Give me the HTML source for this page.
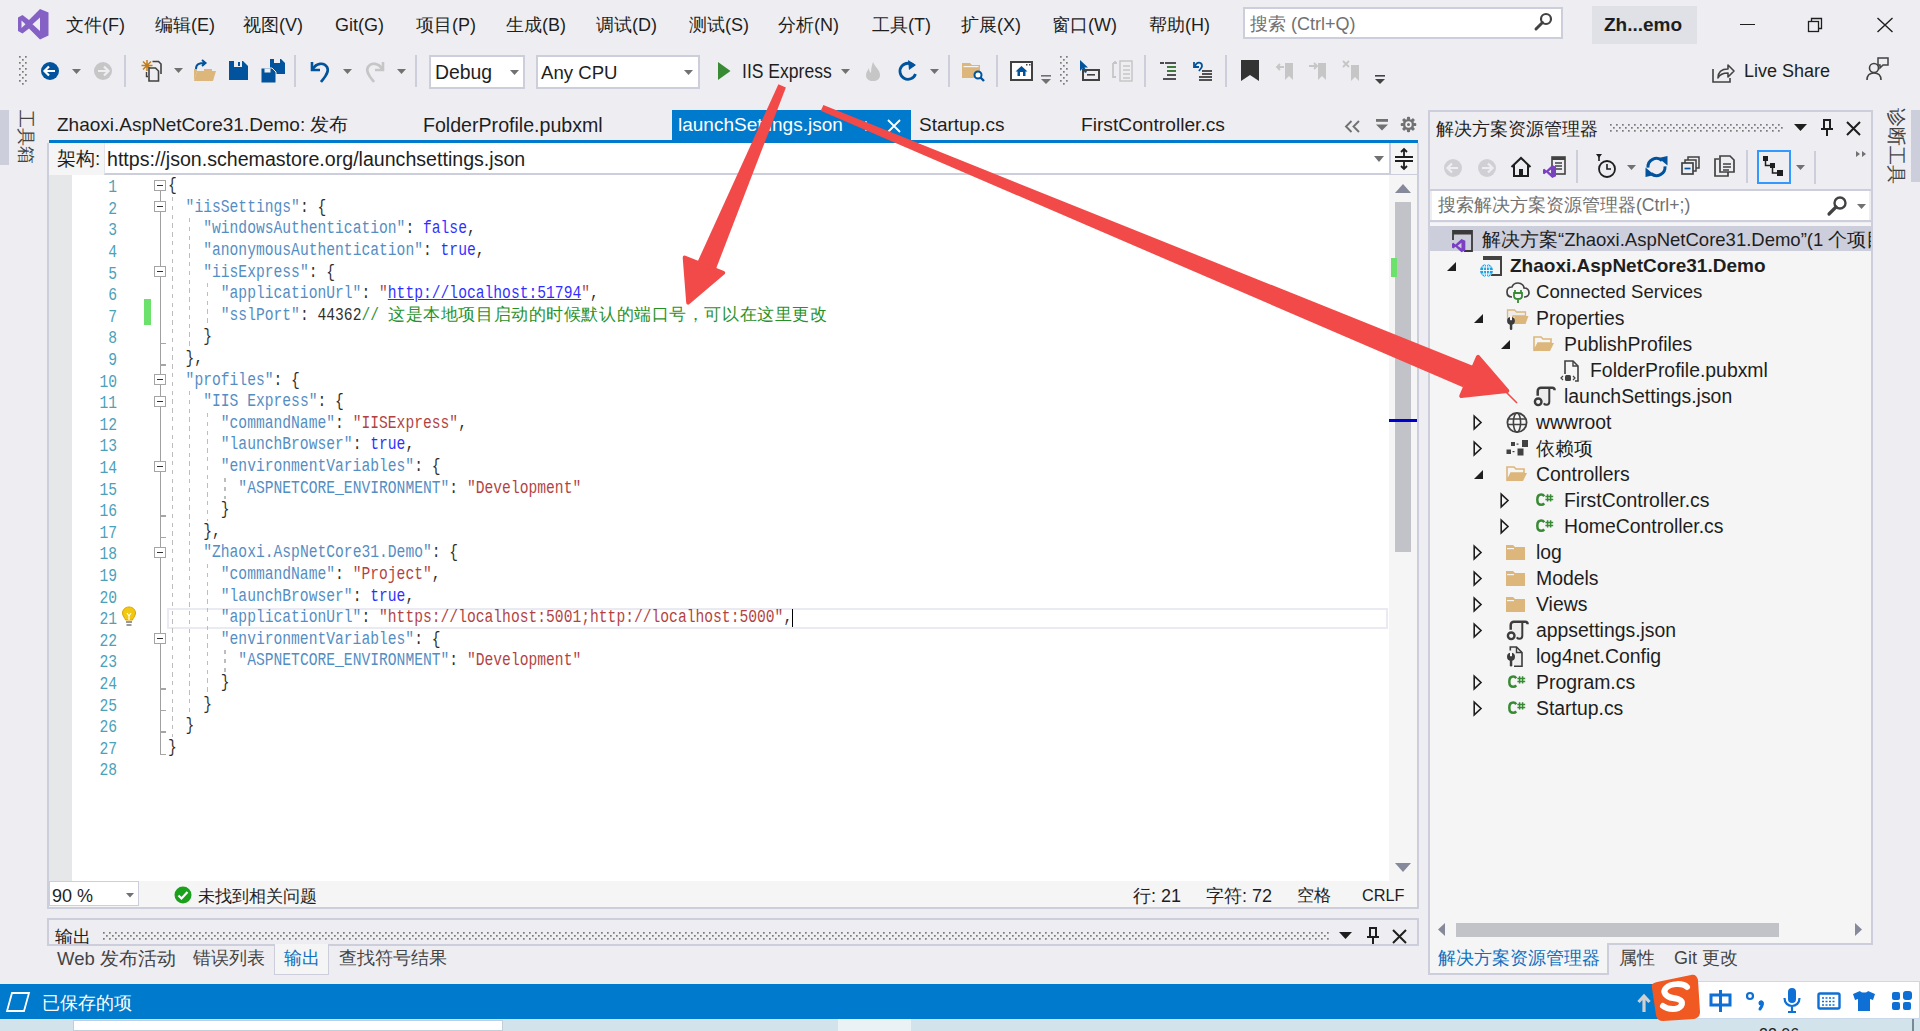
<!DOCTYPE html><html><head><meta charset="utf-8"><title>launchSettings.json - Visual Studio</title><style>
*{margin:0;padding:0}
html,body{width:1920px;height:1031px;overflow:hidden;background:#EEEEF2}
body{position:relative;font-family:"Liberation Sans",sans-serif}
.t{position:absolute;white-space:nowrap;line-height:1.15}
.b{position:absolute}
.s{position:absolute;overflow:visible}
.ln{position:absolute;left:61px;width:56px;text-align:right;font-family:"Liberation Mono",monospace;font-size:18px;line-height:21.6px;color:#2B91AF;transform-origin:100% 0;transform:scaleX(0.8139);opacity:0.85}
.code{position:absolute;left:168.3px;white-space:pre;font-family:"Liberation Mono",monospace;font-size:18px;line-height:21.6px;color:#000;transform-origin:0 0;transform:scaleX(0.8139);opacity:0.82}
.cjk{position:absolute;white-space:pre;color:#008000;font-size:17px;letter-spacing:0.58px;line-height:21.6px;font-family:"Liberation Serif",serif;opacity:0.85;margin-top:-1px}
</style></head><body><svg width="0" height="0" style="position:absolute"><defs><pattern id="gdots" width="6" height="6" patternUnits="userSpaceOnUse"><rect x="0" y="0" width="1.7" height="1.7" fill="#7A7A7A"/><rect x="3" y="3" width="1.7" height="1.7" fill="#7A7A7A"/></pattern></defs></svg>
<svg class="s" style="left:18px;top:9px;" width="31" height="31" viewBox="0 0 31 31"><path fill-rule="evenodd" d="M22 0L30.5 3.5V26.5L22 30.5L11 19.5L4.5 24.5L0 22V8.5L4.5 6L11 11L22 0ZM22 8.5L14.5 15.25L22 22ZM3.5 11.5V19L7.5 15.25Z" fill="#8661C5"/></svg>
<div class="t" style="left:66px;top:15px;font-size:18px;color:#1E1E1E;font-weight:normal;">文件(F)</div>
<div class="t" style="left:155px;top:15px;font-size:18px;color:#1E1E1E;font-weight:normal;">编辑(E)</div>
<div class="t" style="left:243px;top:15px;font-size:18px;color:#1E1E1E;font-weight:normal;">视图(V)</div>
<div class="t" style="left:335px;top:15px;font-size:18px;color:#1E1E1E;font-weight:normal;">Git(G)</div>
<div class="t" style="left:416px;top:15px;font-size:18px;color:#1E1E1E;font-weight:normal;">项目(P)</div>
<div class="t" style="left:506px;top:15px;font-size:18px;color:#1E1E1E;font-weight:normal;">生成(B)</div>
<div class="t" style="left:596px;top:15px;font-size:18px;color:#1E1E1E;font-weight:normal;">调试(D)</div>
<div class="t" style="left:689px;top:15px;font-size:18px;color:#1E1E1E;font-weight:normal;">测试(S)</div>
<div class="t" style="left:778px;top:15px;font-size:18px;color:#1E1E1E;font-weight:normal;">分析(N)</div>
<div class="t" style="left:872px;top:15px;font-size:18px;color:#1E1E1E;font-weight:normal;">工具(T)</div>
<div class="t" style="left:961px;top:15px;font-size:18px;color:#1E1E1E;font-weight:normal;">扩展(X)</div>
<div class="t" style="left:1052px;top:15px;font-size:18px;color:#1E1E1E;font-weight:normal;">窗口(W)</div>
<div class="t" style="left:1149px;top:15px;font-size:18px;color:#1E1E1E;font-weight:normal;">帮助(H)</div>
<div class="b" style="left:1243px;top:7px;width:320px;height:32px;background:#fff;border:2px solid #CCCEDB;box-sizing:border-box"></div>
<div class="t" style="left:1250px;top:14px;font-size:18px;color:#717171;font-weight:normal;">搜索 (Ctrl+Q)</div>
<svg class="s" style="left:1533px;top:12px;" width="20" height="20" viewBox="0 0 20 20"><circle cx="13" cy="7" r="5" fill="none" stroke="#424242" stroke-width="2.2"/><path d="M9.5 10.5L3 17" stroke="#424242" stroke-width="3" stroke-linecap="round"/></svg>
<div class="b" style="left:1592px;top:6px;width:105px;height:38px;background:#DFE1E6"></div>
<div class="t" style="left:1604px;top:14px;font-size:19px;color:#1E1E1E;font-weight:bold;">Zh...emo</div>
<div class="b" style="left:1740px;top:23.5px;width:15px;height:1.2px;background:#1E1E1E"></div>
<svg class="s" style="left:1806px;top:16px;" width="20" height="18" viewBox="0 0 20 18"><rect x="2.5" y="5.5" width="10" height="10" fill="none" stroke="#1E1E1E" stroke-width="1.3"/><path d="M5.5 5.5V2.5H15.5V12.5H12.5" fill="none" stroke="#1E1E1E" stroke-width="1.3"/></svg>
<svg class="s" style="left:1876px;top:17px;" width="18" height="16" viewBox="0 0 18 16"><path d="M1.5 1L16.5 15M16.5 1L1.5 15" stroke="#1E1E1E" stroke-width="1.4"/></svg>
<svg class="s" style="left:19px;top:56px;" width="9" height="29" viewBox="0 0 9 29"><rect width="9" height="29" fill="url(#gdots)"/></svg>
<svg class="s" style="left:40px;top:61px;" width="20" height="20" viewBox="0 0 20 20"><circle cx="10" cy="10" r="9" fill="#00539C"/><path d="M4.5 10H15M9 5.5L4.5 10L9 14.5" fill="none" stroke="#fff" stroke-width="2.2"/></svg>
<svg class="s" style="left:71.5px;top:68.5px;" width="9" height="5" viewBox="0 0 9 5"><path d="M0 0H9L4.5 5Z" fill="#717171"/></svg>
<svg class="s" style="left:93px;top:61px;" width="20" height="20" viewBox="0 0 20 20"><circle cx="10" cy="10" r="9" fill="#C6C6C6"/><path d="M5 10H15.5M11 5.5L15.5 10L11 14.5" fill="none" stroke="#EEEEF2" stroke-width="2.2"/></svg>
<div class="b" style="left:124px;top:55px;width:2px;height:32px;background:#CCCEDB"></div>
<svg class="s" style="left:140px;top:59px;" width="24" height="24" viewBox="0 0 24 24"><path d="M7 1V12M1.5 6.5H12.5M3 2.5L11 10.5M11 2.5L3 10.5" stroke="#C27D1A" stroke-width="1.5"/><path d="M12.5 2.5H18.5L21 5V15" fill="none" stroke="#424242" stroke-width="1.6"/><path d="M9 9H15.5L18.5 12V22H9Z" fill="#EEEEF2" stroke="#424242" stroke-width="1.6"/><path d="M6.5 13V17.5H8" fill="none" stroke="#424242" stroke-width="1.4"/></svg>
<svg class="s" style="left:173.5px;top:67.5px;" width="9" height="5" viewBox="0 0 9 5"><path d="M0 0H9L4.5 5Z" fill="#717171"/></svg>
<svg class="s" style="left:193px;top:59px;" width="24" height="24" viewBox="0 0 24 24"><path d="M1 22L4 12H23L20 22Z" fill="#DCB67A"/><path d="M1 22V10H4V12" fill="#DCB67A"/><path d="M12 10V11H18V13" fill="none" stroke="#DCB67A" stroke-width="2"/><path d="M3 10C3 5 6 4 12 4M9 1L12.5 4L9 7" fill="none" stroke="#00539C" stroke-width="2"/></svg>
<svg class="s" style="left:229px;top:61px;" width="20" height="20" viewBox="0 0 20 20"><path d="M0 0H14L19 5V19H0Z" fill="#00539C"/><rect x="5" y="0" width="8" height="6" fill="#EEEEF2"/><rect x="9" y="1" width="2" height="4" fill="#00539C"/></svg>
<svg class="s" style="left:261px;top:59px;" width="25" height="25" viewBox="0 0 25 25"><path d="M9 0H20L24 4V15H9Z" fill="#00539C"/><rect x="13" y="0" width="6" height="4" fill="#EEEEF2"/><path d="M0 9H11L15 13V24H0Z" fill="#00539C" stroke="#EEEEF2" stroke-width="1"/><rect x="3.5" y="9.5" width="6" height="4" fill="#EEEEF2"/></svg>
<div class="b" style="left:294px;top:55px;width:2px;height:32px;background:#CCCEDB"></div>
<svg class="s" style="left:309px;top:59px;" width="23" height="24" viewBox="0 0 23 24"><path d="M3 3V11H11" fill="none" stroke="#00539C" stroke-width="2.6"/><path d="M4 10C7 4 15 3 18 8C21 13 15 19 12 23" fill="none" stroke="#00539C" stroke-width="2.6"/></svg>
<svg class="s" style="left:342.5px;top:68.5px;" width="9" height="5" viewBox="0 0 9 5"><path d="M0 0H9L4.5 5Z" fill="#717171"/></svg>
<svg class="s" style="left:363px;top:59px;" width="23" height="24" viewBox="0 0 23 24"><path d="M20 3V11H12" fill="none" stroke="#C6C6C6" stroke-width="2.6"/><path d="M19 10C16 4 8 3 5 8C2 13 8 19 11 23" fill="none" stroke="#C6C6C6" stroke-width="2.6"/></svg>
<svg class="s" style="left:396.5px;top:68.5px;" width="9" height="5" viewBox="0 0 9 5"><path d="M0 0H9L4.5 5Z" fill="#717171"/></svg>
<div class="b" style="left:415px;top:55px;width:2px;height:32px;background:#CCCEDB"></div>
<div class="b" style="left:429px;top:55px;width:96px;height:34px;background:#fff;border:2px solid #CCCEDB;box-sizing:border-box"></div>
<div class="t" style="left:435px;top:61px;font-size:19.4px;color:#1E1E1E;font-weight:normal;">Debug</div>
<svg class="s" style="left:509.5px;top:69.5px;" width="9" height="5" viewBox="0 0 9 5"><path d="M0 0H9L4.5 5Z" fill="#717171"/></svg>
<div class="b" style="left:536px;top:55px;width:164px;height:34px;background:#fff;border:2px solid #CCCEDB;box-sizing:border-box"></div>
<div class="t" style="left:541px;top:61.5px;font-size:18.6px;color:#1E1E1E;font-weight:normal;">Any CPU</div>
<svg class="s" style="left:683.5px;top:69.5px;" width="9" height="5" viewBox="0 0 9 5"><path d="M0 0H9L4.5 5Z" fill="#717171"/></svg>
<svg class="s" style="left:717.5px;top:62px;" width="14" height="18" viewBox="0 0 14 18"><path d="M0 0L12.5 9L0 18Z" fill="#388A34"/></svg>
<div class="t" style="left:742px;top:59.5px;font-size:19.4px;color:#1E1E1E;transform-origin:0 0;transform:scaleX(0.905)">IIS Express</div>
<svg class="s" style="left:840.5px;top:68.5px;" width="9" height="5" viewBox="0 0 9 5"><path d="M0 0H9L4.5 5Z" fill="#717171"/></svg>
<svg class="s" style="left:865px;top:62px;" width="16" height="19" viewBox="0 0 16 19"><path d="M8 0C10 5 15 8 15 13C15 17 12 19 8 19C4 19 1 17 1 13C1 10 3 8 4 6C4 9 5 10 6 11C6 6 7 3 8 0Z" fill="#C6C6C6"/></svg>
<svg class="s" style="left:897px;top:60px;" width="22" height="22" viewBox="0 0 22 22"><path d="M17 6A8 8 0 1 0 18.5 14" fill="none" stroke="#00539C" stroke-width="2.8"/><path d="M11 0L19 5L12 10Z" fill="#00539C"/></svg>
<svg class="s" style="left:929.5px;top:68.5px;" width="9" height="5" viewBox="0 0 9 5"><path d="M0 0H9L4.5 5Z" fill="#717171"/></svg>
<div class="b" style="left:948px;top:55px;width:2px;height:32px;background:#CCCEDB"></div>
<svg class="s" style="left:962px;top:61px;" width="23" height="21" viewBox="0 0 23 21"><path d="M0 2H8L10 4H18V17H0Z" fill="#DCB67A"/><rect x="1.5" y="5" width="15" height="1.2" fill="#F5F5F5"/><circle cx="16" cy="14" r="3.5" fill="#fff" stroke="#00539C" stroke-width="2"/><path d="M18.5 16.5L22 20" stroke="#00539C" stroke-width="2.4"/></svg>
<div class="b" style="left:996px;top:55px;width:2px;height:32px;background:#CCCEDB"></div>
<svg class="s" style="left:1010px;top:61px;" width="23" height="20" viewBox="0 0 23 20"><rect x="1" y="1" width="21" height="18" fill="#fff" stroke="#424242" stroke-width="2"/><path d="M11.5 5L5.5 10.5H7.5V15H15.5V10.5H17.5Z" fill="#00539C"/><rect x="10" y="11" width="3" height="4" fill="#fff"/><rect x="16" y="3" width="1.5" height="1.5" fill="#424242"/><rect x="19" y="3" width="1.5" height="1.5" fill="#424242"/></svg>
<svg class="s" style="left:1041px;top:75px;" width="11" height="10" viewBox="0 0 11 10"><rect x="0" y="0" width="10" height="1.6" fill="#717171"/><path d="M0 4H10L5 9Z" fill="#717171"/></svg>
<svg class="s" style="left:1060px;top:56px;" width="9" height="29" viewBox="0 0 9 29"><rect width="9" height="29" fill="url(#gdots)"/></svg>
<svg class="s" style="left:1079px;top:60px;" width="22" height="22" viewBox="0 0 22 22"><path d="M1 0V11L3.5 8.5L6 13L8 12L5.5 7.5H9Z" fill="#00539C"/><rect x="4" y="10" width="16" height="10" fill="none" stroke="#424242" stroke-width="2"/><rect x="8" y="14" width="8" height="1.6" fill="#424242"/></svg>
<svg class="s" style="left:1112px;top:60px;" width="22" height="22" viewBox="0 0 22 22"><path d="M1 3H5M1 3V17H4M3 1V3" fill="none" stroke="#C6C6C6" stroke-width="1.8"/><path d="M8 1H20V21H8Z" fill="none" stroke="#C6C6C6" stroke-width="1.5"/><path d="M11 6H18M11 10H18M11 14H18M11 18H18" stroke="#C6C6C6" stroke-width="1.5"/></svg>
<div class="b" style="left:1144px;top:55px;width:2px;height:32px;background:#CCCEDB"></div>
<svg class="s" style="left:1160px;top:62px;" width="18" height="18" viewBox="0 0 18 18"><path d="M0 1H4" stroke="#1E1E1E" stroke-width="1.6"/><path d="M5 1H16M7 5H16M7 9H16M7 13H16M3 17H16" stroke="#1E1E1E" stroke-width="1.6"/><path d="M7 5H16M7 9H16" stroke="#388A34" stroke-width="1.6"/></svg>
<svg class="s" style="left:1192px;top:60px;" width="22" height="22" viewBox="0 0 22 22"><path d="M2 2V7H7" fill="none" stroke="#00539C" stroke-width="1.8"/><path d="M3 6C5 1 10 2 10 6C10 8 8 9 7 11" fill="none" stroke="#00539C" stroke-width="1.8"/><path d="M10 11H20M10 14H20M7 17H20M7 20H20" stroke="#1E1E1E" stroke-width="1.6"/></svg>
<div class="b" style="left:1225px;top:55px;width:2px;height:32px;background:#CCCEDB"></div>
<svg class="s" style="left:1240px;top:60px;" width="20" height="21" viewBox="0 0 20 21"><path d="M1 0H19V21L10 15L1 21Z" fill="#333"/></svg>
<svg class="s" style="left:1276px;top:60px;" width="22" height="22" viewBox="0 0 22 22"><path d="M9 3H17V20L13 16L9 20Z" fill="#C6C6C6"/><path d="M8 7H1M4 4L1 7L4 10" fill="none" stroke="#C6C6C6" stroke-width="1.8"/></svg>
<svg class="s" style="left:1309px;top:60px;" width="22" height="22" viewBox="0 0 22 22"><path d="M9 3H17V20L13 16L9 20Z" fill="#C6C6C6"/><path d="M0 6H8M5 3L8 6L5 9" fill="none" stroke="#C6C6C6" stroke-width="1.8"/></svg>
<svg class="s" style="left:1342px;top:60px;" width="22" height="22" viewBox="0 0 22 22"><path d="M9 5H17V21L13 17L9 21Z" fill="#C6C6C6"/><path d="M1 1L7 7M7 1L1 7" stroke="#C6C6C6" stroke-width="1.8"/></svg>
<svg class="s" style="left:1375px;top:75px;" width="11" height="10" viewBox="0 0 11 10"><rect x="0" y="0" width="10" height="1.6" fill="#424242"/><path d="M0 4H10L5 9Z" fill="#424242"/></svg>
<svg class="s" style="left:1712px;top:61px;" width="24" height="22" viewBox="0 0 24 22"><path d="M1 8V21H18V17" fill="none" stroke="#424242" stroke-width="1.6"/><path d="M6 17C6 10 11 8 16 8V4L22 10L16 16V12C12 12 8 13 6 17Z" fill="none" stroke="#424242" stroke-width="1.6" stroke-linejoin="round"/></svg>
<div class="t" style="left:1744px;top:61px;font-size:18px;color:#1E1E1E;font-weight:normal;">Live Share</div>
<svg class="s" style="left:1866px;top:56px;" width="24" height="26" viewBox="0 0 24 26"><circle cx="8" cy="12" r="4.5" fill="none" stroke="#424242" stroke-width="1.6"/><path d="M1 24C1 19 4 17 8 17C12 17 15 19 15 24" fill="none" stroke="#424242" stroke-width="1.6"/><path d="M12 2H22V9H17L14 12V9H12Z" fill="none" stroke="#424242" stroke-width="1.5"/></svg>
<div class="b" style="left:0px;top:110px;width:9px;height:55px;background:#CCCEDB"></div>
<div class="t" style="left:36.5px;top:110px;font-size:17.5px;color:#444;transform-origin:0 0;transform:rotate(90deg);line-height:22px">工具箱</div>
<div class="t" style="left:57px;top:114px;font-size:19px;color:#1E1E1E;font-weight:normal;">Zhaoxi.AspNetCore31.Demo: 发布</div>
<div class="t" style="left:423px;top:114px;font-size:19.6px;color:#1E1E1E;font-weight:normal;">FolderProfile.pubxml</div>
<div class="b" style="left:672px;top:110px;width:239px;height:33px;background:#007ACC"></div>
<div class="t" style="left:678px;top:114px;font-size:19px;color:#fff;font-weight:normal;">launchSettings.json</div>
<svg class="s" style="left:857px;top:118px;" width="16" height="16" viewBox="0 0 16 16"><path d="M2 8H9M9 3V13M9 8H14" stroke="#C7E0F4" stroke-width="1.6"/></svg>
<svg class="s" style="left:886px;top:118px;" width="16" height="16" viewBox="0 0 16 16"><path d="M2 2L14 14M14 2L2 14" stroke="#fff" stroke-width="1.8"/></svg>
<div class="t" style="left:919px;top:114px;font-size:19px;color:#1E1E1E;font-weight:normal;">Startup.cs</div>
<div class="t" style="left:1081px;top:114px;font-size:19.2px;color:#1E1E1E;font-weight:normal;">FirstController.cs</div>
<svg class="s" style="left:1344px;top:120px;" width="18" height="14" viewBox="0 0 18 14"><path d="M7.5 1L2 6.5L7.5 12M15 1L9.5 6.5L15 12" fill="none" stroke="#717171" stroke-width="1.9"/></svg>
<svg class="s" style="left:1375px;top:118px;" width="14" height="14" viewBox="0 0 14 14"><rect x="1" y="1" width="12" height="2.8" fill="#717171"/><path d="M1 6.5H13L7 12.5Z" fill="#717171"/></svg>
<svg class="s" style="left:1400px;top:116px;" width="17" height="17" viewBox="0 0 17 17"><g transform="translate(8.5,8.5)" fill="#717171"><circle r="5.6"/><g id="th"><rect x="-1.6" y="-7.8" width="3.2" height="3.5" rx="1.2"/></g><use href="#th" transform="rotate(45)"/><use href="#th" transform="rotate(90)"/><use href="#th" transform="rotate(135)"/><use href="#th" transform="rotate(180)"/><use href="#th" transform="rotate(225)"/><use href="#th" transform="rotate(270)"/><use href="#th" transform="rotate(315)"/><circle r="3.2" fill="#EEEEF2"/><circle r="1.5"/></g></svg>
<div class="b" style="left:49px;top:140px;width:1369px;height:3px;background:#007ACC"></div>
<div class="b" style="left:47px;top:143px;width:2px;height:765px;background:#CCCEDB"></div>
<div class="b" style="left:1417px;top:143px;width:2px;height:765px;background:#CCCEDB"></div>
<div class="b" style="left:49px;top:143px;width:1368px;height:32px;background:#F5F5F5"></div>
<div class="t" style="left:57px;top:148px;font-size:19px;color:#1E1E1E;font-weight:normal;">架构:</div>
<div class="b" style="left:104px;top:143px;width:1285px;height:32px;background:#fff;border-bottom:2px solid #CCCEDB;border-left:1px solid #E4E5EA;box-sizing:border-box"></div>
<div class="t" style="left:107px;top:148px;font-size:19.6px;color:#1E1E1E;font-weight:normal;">https://json.schemastore.org/launchsettings.json</div>
<svg class="s" style="left:1374.0px;top:156.0px;" width="10" height="6" viewBox="0 0 10 6"><path d="M0 0H10L5.0 6Z" fill="#717171"/></svg>
<div class="b" style="left:1389px;top:143px;width:28px;height:33px;background:#F5F5F5;border-left:2px solid #CCCEDB;border-bottom:2px solid #CCCEDB;box-sizing:border-box"></div>
<svg class="s" style="left:1394px;top:148px;" width="20" height="22" viewBox="0 0 20 22"><path d="M1 9H19M1 13H19" stroke="#1E1E1E" stroke-width="2"/><path d="M10 1V8M7 4L10 1L13 4M10 14V21M7 18L10 21L13 18" fill="none" stroke="#1E1E1E" stroke-width="1.8"/></svg>
<div class="b" style="left:49px;top:175px;width:23px;height:706px;background:#E6E7E8"></div>
<div class="b" style="left:72px;top:175px;width:1317px;height:706px;background:#fff"></div>
<div class="b" style="left:1389px;top:175px;width:28px;height:706px;background:#F5F5F5"></div>
<svg class="s" style="left:1395px;top:184px;" width="16" height="10" viewBox="0 0 16 10"><path d="M0 9H16L8 0Z" fill="#868999"/></svg>
<div class="b" style="left:1395px;top:202px;width:16px;height:350px;background:#C2C3C9"></div>
<div class="b" style="left:1391px;top:258px;width:6px;height:19px;background:#6CE26C"></div>
<div class="b" style="left:1389px;top:419px;width:28px;height:3px;background:#0000CD"></div>
<svg class="s" style="left:1395px;top:863px;" width="16" height="10" viewBox="0 0 16 10"><path d="M0 0H16L8 9Z" fill="#868999"/></svg>
<div class="b" style="left:167px;top:607.7px;width:1221px;height:21px;border:2px solid #EAEAF2;box-sizing:border-box"></div>
<div class="ln" style="top:177.2px">1</div>
<div class="ln" style="top:198.8px">2</div>
<div class="ln" style="top:220.4px">3</div>
<div class="ln" style="top:242.0px">4</div>
<div class="ln" style="top:263.6px">5</div>
<div class="ln" style="top:285.2px">6</div>
<div class="ln" style="top:306.8px">7</div>
<div class="ln" style="top:328.4px">8</div>
<div class="ln" style="top:350.0px">9</div>
<div class="ln" style="top:371.6px">10</div>
<div class="ln" style="top:393.2px">11</div>
<div class="ln" style="top:414.8px">12</div>
<div class="ln" style="top:436.4px">13</div>
<div class="ln" style="top:458.0px">14</div>
<div class="ln" style="top:479.6px">15</div>
<div class="ln" style="top:501.2px">16</div>
<div class="ln" style="top:522.8px">17</div>
<div class="ln" style="top:544.4px">18</div>
<div class="ln" style="top:566.0px">19</div>
<div class="ln" style="top:587.6px">20</div>
<div class="ln" style="top:609.2px">21</div>
<div class="ln" style="top:630.8px">22</div>
<div class="ln" style="top:652.4px">23</div>
<div class="ln" style="top:674.0px">24</div>
<div class="ln" style="top:695.6px">25</div>
<div class="ln" style="top:717.2px">26</div>
<div class="ln" style="top:738.8px">27</div>
<div class="ln" style="top:760.4px">28</div>
<div class="code" style="top:175.2px"><span style="color:#000000">{</span></div>
<div class="code" style="top:196.8px"><span style="color:#000000">  </span><span style="color:#2E75B6">&quot;iisSettings&quot;</span><span style="color:#000000">: {</span></div>
<div class="code" style="top:218.4px"><span style="color:#000000">    </span><span style="color:#2E75B6">&quot;windowsAuthentication&quot;</span><span style="color:#000000">: </span><span style="color:#0000FF">false</span><span style="color:#000000">,</span></div>
<div class="code" style="top:240.0px"><span style="color:#000000">    </span><span style="color:#2E75B6">&quot;anonymousAuthentication&quot;</span><span style="color:#000000">: </span><span style="color:#0000FF">true</span><span style="color:#000000">,</span></div>
<div class="code" style="top:261.6px"><span style="color:#000000">    </span><span style="color:#2E75B6">&quot;iisExpress&quot;</span><span style="color:#000000">: {</span></div>
<div class="code" style="top:283.2px"><span style="color:#000000">      </span><span style="color:#2E75B6">&quot;applicationUrl&quot;</span><span style="color:#000000">: </span><span style="color:#A31515">&quot;</span><span style="color:#0000FF;text-decoration:underline">http://localhost:51794</span><span style="color:#A31515">&quot;</span><span style="color:#000000">,</span></div>
<div class="cjk" style="left:388.05px;top:304.8px">这是本地项目启动的时候默认的端口号，可以在这里更改</div>
<div class="code" style="top:304.8px"><span style="color:#000000">      </span><span style="color:#2E75B6">&quot;sslPort&quot;</span><span style="color:#000000">: </span><span style="color:#000000">44362</span><span style="color:#008000">// </span></div>
<div class="code" style="top:326.4px"><span style="color:#000000">    }</span></div>
<div class="code" style="top:348.0px"><span style="color:#000000">  },</span></div>
<div class="code" style="top:369.6px"><span style="color:#000000">  </span><span style="color:#2E75B6">&quot;profiles&quot;</span><span style="color:#000000">: {</span></div>
<div class="code" style="top:391.2px"><span style="color:#000000">    </span><span style="color:#2E75B6">&quot;IIS Express&quot;</span><span style="color:#000000">: {</span></div>
<div class="code" style="top:412.8px"><span style="color:#000000">      </span><span style="color:#2E75B6">&quot;commandName&quot;</span><span style="color:#000000">: </span><span style="color:#A31515">&quot;IISExpress&quot;</span><span style="color:#000000">,</span></div>
<div class="code" style="top:434.4px"><span style="color:#000000">      </span><span style="color:#2E75B6">&quot;launchBrowser&quot;</span><span style="color:#000000">: </span><span style="color:#0000FF">true</span><span style="color:#000000">,</span></div>
<div class="code" style="top:456.0px"><span style="color:#000000">      </span><span style="color:#2E75B6">&quot;environmentVariables&quot;</span><span style="color:#000000">: {</span></div>
<div class="code" style="top:477.6px"><span style="color:#000000">        </span><span style="color:#2E75B6">&quot;ASPNETCORE_ENVIRONMENT&quot;</span><span style="color:#000000">: </span><span style="color:#A31515">&quot;Development&quot;</span></div>
<div class="code" style="top:499.2px"><span style="color:#000000">      }</span></div>
<div class="code" style="top:520.8px"><span style="color:#000000">    },</span></div>
<div class="code" style="top:542.4px"><span style="color:#000000">    </span><span style="color:#2E75B6">&quot;Zhaoxi.AspNetCore31.Demo&quot;</span><span style="color:#000000">: {</span></div>
<div class="code" style="top:564.0px"><span style="color:#000000">      </span><span style="color:#2E75B6">&quot;commandName&quot;</span><span style="color:#000000">: </span><span style="color:#A31515">&quot;Project&quot;</span><span style="color:#000000">,</span></div>
<div class="code" style="top:585.6px"><span style="color:#000000">      </span><span style="color:#2E75B6">&quot;launchBrowser&quot;</span><span style="color:#000000">: </span><span style="color:#0000FF">true</span><span style="color:#000000">,</span></div>
<div class="code" style="top:607.2px"><span style="color:#000000">      </span><span style="color:#2E75B6">&quot;applicationUrl&quot;</span><span style="color:#000000">: </span><span style="color:#A31515">&quot;https://localhost:5001;http://localhost:5000&quot;</span><span style="color:#000000">,</span></div>
<div class="code" style="top:628.8px"><span style="color:#000000">      </span><span style="color:#2E75B6">&quot;environmentVariables&quot;</span><span style="color:#000000">: {</span></div>
<div class="code" style="top:650.4px"><span style="color:#000000">        </span><span style="color:#2E75B6">&quot;ASPNETCORE_ENVIRONMENT&quot;</span><span style="color:#000000">: </span><span style="color:#A31515">&quot;Development&quot;</span></div>
<div class="code" style="top:672.0px"><span style="color:#000000">      }</span></div>
<div class="code" style="top:693.6px"><span style="color:#000000">    }</span></div>
<div class="code" style="top:715.2px"><span style="color:#000000">  }</span></div>
<div class="code" style="top:736.8px"><span style="color:#000000">}</span></div>
<div class="code" style="top:758.4px"></div>
<div class="b" style="left:791.5px;top:609.2px;width:1.6px;height:18px;background:#000"></div>
<div class="b" style="left:144px;top:299px;width:7px;height:26px;background:#6CE26C"></div>
<svg class="s" style="left:121px;top:606px;" width="16" height="22" viewBox="0 0 16 22"><path d="M8 1C4 1 1.5 4 1.5 7C1.5 10 4 12 4.5 14H11.5C12 12 14.5 10 14.5 7C14.5 4 12 1 8 1Z" fill="#F2C811" stroke="#D9A400" stroke-width="1"/><path d="M6 7L8 10L10 7M8 10V14" fill="none" stroke="#fff" stroke-width="1.2"/><rect x="5" y="15" width="6" height="2" fill="#999"/><rect x="5.5" y="18" width="5" height="2" fill="#999"/></svg>
<div class="b" style="left:159.5px;top:190.79999999999998px;width:1.8px;height:564.36px;background:#A0A0A0"></div>
<div class="b" style="left:160px;top:364.2px;width:6px;height:1.4px;background:#A5A5A5"></div>
<div class="b" style="left:160px;top:342.59999999999997px;width:6px;height:1.4px;background:#A5A5A5"></div>
<div class="b" style="left:160px;top:731.4000000000001px;width:6px;height:1.4px;background:#A5A5A5"></div>
<div class="b" style="left:160px;top:537.0px;width:6px;height:1.4px;background:#A5A5A5"></div>
<div class="b" style="left:160px;top:515.4px;width:6px;height:1.4px;background:#A5A5A5"></div>
<div class="b" style="left:160px;top:709.8000000000002px;width:6px;height:1.4px;background:#A5A5A5"></div>
<div class="b" style="left:160px;top:688.2px;width:6px;height:1.4px;background:#A5A5A5"></div>
<div class="b" style="left:160px;top:753.76px;width:6px;height:1.4px;background:#A5A5A5"></div>
<div class="b" style="left:154px;top:180px;width:12px;height:11px;border:1px solid #A5A5A5;background:#fff;box-sizing:border-box"></div>
<div class="b" style="left:157px;top:185px;width:6px;height:1px;background:#333"></div>
<div class="b" style="left:154px;top:201px;width:12px;height:11px;border:1px solid #A5A5A5;background:#fff;box-sizing:border-box"></div>
<div class="b" style="left:157px;top:206px;width:6px;height:1px;background:#333"></div>
<div class="b" style="left:154px;top:266px;width:12px;height:11px;border:1px solid #A5A5A5;background:#fff;box-sizing:border-box"></div>
<div class="b" style="left:157px;top:271px;width:6px;height:1px;background:#333"></div>
<div class="b" style="left:154px;top:374px;width:12px;height:11px;border:1px solid #A5A5A5;background:#fff;box-sizing:border-box"></div>
<div class="b" style="left:157px;top:379px;width:6px;height:1px;background:#333"></div>
<div class="b" style="left:154px;top:396px;width:12px;height:11px;border:1px solid #A5A5A5;background:#fff;box-sizing:border-box"></div>
<div class="b" style="left:157px;top:401px;width:6px;height:1px;background:#333"></div>
<div class="b" style="left:154px;top:461px;width:12px;height:11px;border:1px solid #A5A5A5;background:#fff;box-sizing:border-box"></div>
<div class="b" style="left:157px;top:466px;width:6px;height:1px;background:#333"></div>
<div class="b" style="left:154px;top:547px;width:12px;height:11px;border:1px solid #A5A5A5;background:#fff;box-sizing:border-box"></div>
<div class="b" style="left:157px;top:552px;width:6px;height:1px;background:#333"></div>
<div class="b" style="left:154px;top:633px;width:12px;height:11px;border:1px solid #A5A5A5;background:#fff;box-sizing:border-box"></div>
<div class="b" style="left:157px;top:638px;width:6px;height:1px;background:#333"></div>
<div class="b" style="left:171.5px;top:196.8px;width:1.4px;height:540.0px;background:repeating-linear-gradient(to bottom,#BDBDBD 0 4.4px,transparent 4.4px 8.8px)"></div>
<div class="b" style="left:189.1px;top:218.4px;width:1.4px;height:129.6px;background:repeating-linear-gradient(to bottom,#BDBDBD 0 4.4px,transparent 4.4px 8.8px)"></div>
<div class="b" style="left:189.1px;top:391.2px;width:1.4px;height:324.0px;background:repeating-linear-gradient(to bottom,#BDBDBD 0 4.4px,transparent 4.4px 8.8px)"></div>
<div class="b" style="left:206.7px;top:283.2px;width:1.4px;height:43.2px;background:repeating-linear-gradient(to bottom,#BDBDBD 0 4.4px,transparent 4.4px 8.8px)"></div>
<div class="b" style="left:206.7px;top:412.8px;width:1.4px;height:108.0px;background:repeating-linear-gradient(to bottom,#BDBDBD 0 4.4px,transparent 4.4px 8.8px)"></div>
<div class="b" style="left:206.7px;top:564.0px;width:1.4px;height:129.6px;background:repeating-linear-gradient(to bottom,#BDBDBD 0 4.4px,transparent 4.4px 8.8px)"></div>
<div class="b" style="left:224.2px;top:477.6px;width:1.4px;height:21.6px;background:repeating-linear-gradient(to bottom,#BDBDBD 0 4.4px,transparent 4.4px 8.8px)"></div>
<div class="b" style="left:224.2px;top:650.4px;width:1.4px;height:21.6px;background:repeating-linear-gradient(to bottom,#BDBDBD 0 4.4px,transparent 4.4px 8.8px)"></div>
<div class="b" style="left:49px;top:881px;width:1368px;height:26px;background:#F5F5F5"></div>
<div class="b" style="left:47px;top:907px;width:372px;height:2px;background:#CCCEDB"></div>
<div class="b" style="left:47px;top:907px;width:1372px;height:2px;background:#CCCEDB"></div>
<div class="b" style="left:49px;top:881px;width:90px;height:25px;background:#fff;border:1px solid #CCCEDB;box-sizing:border-box"></div>
<div class="t" style="left:52px;top:885.5px;font-size:18px;color:#1E1E1E;font-weight:normal;">90 %</div>
<svg class="s" style="left:126.0px;top:892.75px;" width="8" height="4.5" viewBox="0 0 8 4.5"><path d="M0 0H8L4.0 4.5Z" fill="#717171"/></svg>
<svg class="s" style="left:174px;top:886px;" width="18" height="18" viewBox="0 0 18 18"><circle cx="9" cy="9" r="8.5" fill="#1BA01B"/><path d="M4.5 9.5L7.5 12.5L13.5 6" fill="none" stroke="#fff" stroke-width="2.2"/></svg>
<div class="t" style="left:198px;top:886.5px;font-size:17px;color:#1E1E1E;font-weight:normal;">未找到相关问题</div>
<div class="t" style="left:1133px;top:885.5px;font-size:18px;color:#1E1E1E;font-weight:normal;">行: 21</div>
<div class="t" style="left:1206px;top:885.5px;font-size:18px;color:#1E1E1E;font-weight:normal;">字符: 72</div>
<div class="t" style="left:1297px;top:886px;font-size:17px;color:#1E1E1E;font-weight:normal;">空格</div>
<div class="t" style="left:1362px;top:886px;font-size:16.3px;color:#1E1E1E;font-weight:normal;">CRLF</div>
<div class="b" style="left:47px;top:918px;width:1372px;height:2px;background:#CCCEDB"></div>
<div class="b" style="left:47px;top:918px;width:2px;height:28px;background:#CCCEDB"></div>
<div class="b" style="left:1417px;top:918px;width:2px;height:28px;background:#CCCEDB"></div>
<div class="b" style="left:47px;top:944px;width:1372px;height:2px;background:#CCCEDB"></div>
<div class="b" style="left:49px;top:920px;width:1368px;height:24px;overflow:hidden"><div class="t" style="left:6px;top:4px;font-size:18px;color:#1E1E1E;margin-top:3px">输出</div></div>
<svg class="s" style="left:103px;top:932px;" width="1227" height="9" viewBox="0 0 1227 9"><rect width="1227" height="9" fill="url(#gdots)"/></svg>
<svg class="s" style="left:1339px;top:932px;" width="14" height="8" viewBox="0 0 14 8"><path d="M0 0H13L6.5 7Z" fill="#1E1E1E"/></svg>
<svg class="s" style="left:1366px;top:927px;" width="14" height="18" viewBox="0 0 14 18"><path d="M3 1H11M4 1V10M10 1V10M1 10H13M7 10V17" fill="none" stroke="#1E1E1E" stroke-width="2"/></svg>
<svg class="s" style="left:1392px;top:929px;" width="15" height="14" viewBox="0 0 15 14"><path d="M1 1L14 14M14 1L1 14" stroke="#1E1E1E" stroke-width="2"/></svg>
<div class="t" style="left:57px;top:948px;font-size:18.5px;color:#444;font-weight:normal;">Web 发布活动</div>
<div class="t" style="left:193px;top:948px;font-size:18px;color:#444;font-weight:normal;">错误列表</div>
<div class="b" style="left:274px;top:944px;width:55px;height:31px;background:#F5F5F5;border:1px solid #CCCEDB;border-top:none;box-sizing:border-box"></div>
<div class="t" style="left:284px;top:948px;font-size:18px;color:#0E70C0;font-weight:normal;">输出</div>
<div class="t" style="left:339px;top:948px;font-size:18px;color:#444;font-weight:normal;">查找符号结果</div>
<div class="b" style="left:0px;top:984px;width:1920px;height:35px;background:#007ACC"></div>
<svg class="s" style="left:6px;top:991px;" width="24" height="22" viewBox="0 0 24 22"><path d="M6 2H23L18 20H1Z" fill="none" stroke="#fff" stroke-width="1.8"/></svg>
<div class="t" style="left:42px;top:993px;font-size:18px;color:#fff;font-weight:normal;">已保存的项</div>
<div class="b" style="left:0px;top:1019px;width:1920px;height:12px;background:#D3E3EC"></div>
<div class="b" style="left:73px;top:1020px;width:430px;height:11px;background:#FFFFFF;border:1px solid #BFD0DA;box-sizing:border-box"></div>
<div class="b" style="left:838px;top:1019px;width:73px;height:12px;background:#EBF2F6"></div>
<div class="b" style="left:1428px;top:110px;width:445px;height:835px;background:#EEEEF2;border:2px solid #CCCEDB;box-sizing:border-box"></div>
<div class="t" style="left:1436px;top:118.5px;font-size:18px;color:#1E1E1E;font-weight:normal;">解决方案资源管理器</div>
<svg class="s" style="left:1610px;top:124px;" width="173" height="9" viewBox="0 0 173 9"><rect width="173" height="9" fill="url(#gdots)"/></svg>
<svg class="s" style="left:1794px;top:124px;" width="14" height="8" viewBox="0 0 14 8"><path d="M0 0H13L6.5 7Z" fill="#1E1E1E"/></svg>
<svg class="s" style="left:1820px;top:119px;" width="14" height="18" viewBox="0 0 14 18"><path d="M3 1H11M4 1V10M10 1V10M1 10H13M7 10V17" fill="none" stroke="#1E1E1E" stroke-width="2"/></svg>
<svg class="s" style="left:1846px;top:121px;" width="15" height="15" viewBox="0 0 15 15"><path d="M1 1L14 14M14 1L1 14" stroke="#1E1E1E" stroke-width="2"/></svg>
<svg class="s" style="left:1443px;top:158px;" width="20" height="20" viewBox="0 0 20 20"><circle cx="10" cy="10" r="9" fill="#D0D0D4"/><path d="M4.5 10H15M9 5.5L4.5 10L9 14.5" fill="none" stroke="#EEEEF2" stroke-width="2.2"/></svg>
<svg class="s" style="left:1477px;top:158px;" width="20" height="20" viewBox="0 0 20 20"><circle cx="10" cy="10" r="9" fill="#D0D0D4"/><path d="M5 10H15.5M11 5.5L15.5 10L11 14.5" fill="none" stroke="#EEEEF2" stroke-width="2.2"/></svg>
<svg class="s" style="left:1510px;top:156px;" width="22" height="22" viewBox="0 0 22 22"><path d="M1.5 11L11 2L20.5 11M4 9V20H18V9" fill="none" stroke="#1E1E1E" stroke-width="2"/><rect x="9" y="13" width="4" height="7" fill="#1E1E1E"/></svg>
<svg class="s" style="left:1543px;top:156px;" width="24" height="22" viewBox="0 0 24 22"><rect x="9" y="1" width="13" height="17" fill="none" stroke="#424242" stroke-width="1.6"/><rect x="9" y="1" width="13" height="3" fill="#424242"/><path d="M12 7H19M12 10H19M12 13H19" stroke="#424242" stroke-width="1.3"/><g transform="translate(0,9) scale(0.42)"><path d="M22 0L31 4V27L22 31L8 18L3 22L0 20V11L3 9L8 13ZM22 9L13 15.5L22 22Z" fill="#7B3FC4"/></g></svg>
<div class="b" style="left:1576px;top:150px;width:2px;height:33px;background:#CCCEDB"></div>
<svg class="s" style="left:1592px;top:153px;" width="26" height="26" viewBox="0 0 26 26"><path d="M4 1H10L7 5Z" fill="#1E1E1E"/><path d="M7 4V8" stroke="#1E1E1E" stroke-width="1.6"/><circle cx="15" cy="16" r="8" fill="none" stroke="#1E1E1E" stroke-width="1.8"/><path d="M15 11V16H19" fill="none" stroke="#1E1E1E" stroke-width="1.6"/></svg>
<svg class="s" style="left:1626.5px;top:164.5px;" width="9" height="5" viewBox="0 0 9 5"><path d="M0 0H9L4.5 5Z" fill="#717171"/></svg>
<svg class="s" style="left:1645px;top:155px;" width="23" height="23" viewBox="0 0 23 23"><path d="M3 12.7A8.5 8.5 0 0 1 17 5.5" fill="none" stroke="#00539C" stroke-width="3"/><path d="M13.5 3L22.5 1V10.5Z" fill="#00539C"/><path d="M20 11.3A8.5 8.5 0 0 1 6 18.5" fill="none" stroke="#00539C" stroke-width="3"/><path d="M9.5 20L0.5 22V12.5Z" fill="#00539C"/></svg>
<svg class="s" style="left:1681px;top:156px;" width="20" height="20" viewBox="0 0 20 20"><rect x="1" y="7" width="11" height="11" fill="none" stroke="#424242" stroke-width="1.7"/><path d="M4 7V4H15V15H12M7 4V1H18V12H15" fill="none" stroke="#424242" stroke-width="1.5"/><path d="M3.5 12.5H9.5" stroke="#00539C" stroke-width="1.7"/></svg>
<svg class="s" style="left:1714px;top:155px;" width="22" height="22" viewBox="0 0 22 22"><path d="M5 4H1V21H14V17" fill="none" stroke="#424242" stroke-width="1.7"/><path d="M6 1H16L20 5V17H6Z" fill="none" stroke="#424242" stroke-width="1.7"/><path d="M9 9H17M9 12H17M9 15H15" stroke="#424242" stroke-width="1.4"/></svg>
<div class="b" style="left:1746px;top:150px;width:2px;height:33px;background:#CCCEDB"></div>
<div class="b" style="left:1757px;top:150px;width:34px;height:34px;border:2px solid #3399FF;box-sizing:border-box"></div>
<svg class="s" style="left:1762px;top:155px;" width="24" height="24" viewBox="0 0 24 24"><rect x="1" y="1" width="5" height="5" fill="#1E1E1E"/><rect x="8" y="8" width="5" height="5" fill="#1E1E1E"/><rect x="15" y="15" width="6" height="6" fill="#1E1E1E"/><path d="M3.5 6V10.5H8M10.5 13V18H15" fill="none" stroke="#1E1E1E" stroke-width="1.5"/></svg>
<svg class="s" style="left:1795.5px;top:164.5px;" width="9" height="5" viewBox="0 0 9 5"><path d="M0 0H9L4.5 5Z" fill="#717171"/></svg>
<div class="b" style="left:1814px;top:151px;width:2px;height:33px;background:#CCCEDB"></div>
<svg class="s" style="left:1856px;top:151px;" width="12" height="8" viewBox="0 0 12 8"><path d="M0 0L4 3L0 6ZM6 0L10 3L6 6Z" fill="#717171"/></svg>
<div class="b" style="left:1430px;top:189px;width:441px;height:2px;background:#CCCEDB"></div>
<div class="b" style="left:1432px;top:191px;width:437px;height:29px;background:#fff"></div>
<div class="t" style="left:1438px;top:195px;font-size:17.6px;color:#717171;font-weight:normal;">搜索解决方案资源管理器(Ctrl+;)</div>
<svg class="s" style="left:1826px;top:195px;" width="22" height="22" viewBox="0 0 22 22"><circle cx="14" cy="8" r="5.5" fill="none" stroke="#424242" stroke-width="2.4"/><path d="M10 12L3 19" stroke="#424242" stroke-width="3.2" stroke-linecap="round"/></svg>
<svg class="s" style="left:1856.5px;top:203.5px;" width="9" height="5" viewBox="0 0 9 5"><path d="M0 0H9L4.5 5Z" fill="#717171"/></svg>
<div class="b" style="left:1430px;top:223px;width:441px;height:720px;background:#F5F5F5"></div>
<div class="b" style="left:1430px;top:220px;width:441px;height:2px;background:#CCCEDB"></div>
<div class="b" style="left:1430px;top:225.5px;width:441px;height:25.5px;background:#CCCEDB"></div>
<svg class="s" style="left:1452px;top:230px;" width="24" height="22" viewBox="0 0 24 22"><path d="M1 10V1H20V21H12" fill="none" stroke="#3A3A3A" stroke-width="1.8"/><rect x="1" y="1" width="19" height="3.5" fill="#3A3A3A"/><g transform="translate(0,9) scale(0.43)"><path d="M22 0L31 4V27L22 31L8 18L3 22L0 20V11L3 9L8 13ZM22 9L13 15.5L22 22Z" fill="#7B3FC4"/></g></svg>
<div class="b" style="left:1430px;top:227px;width:441px;height:26px;overflow:hidden"><div class="t" style="left:52px;top:2px;font-size:18.5px;color:#1E1E1E">解决方案“Zhaoxi.AspNetCore31.Demo”(1 个项目</div></div>
<svg class="s" style="left:1447px;top:262px;" width="10" height="10" viewBox="0 0 10 10"><path d="M9 0V9H0Z" fill="#1E1E1E"/></svg>
<svg class="s" style="left:1479px;top:256px;" width="24" height="22" viewBox="0 0 24 22"><path d="M4 1H22V19H12" fill="none" stroke="#424242" stroke-width="2"/><rect x="4" y="1" width="18" height="3" fill="#424242"/><circle cx="7.5" cy="14.5" r="6.5" fill="#1BA1E2"/><path d="M1 14.5H14M7.5 8V21M2.5 11H12.5M2.5 18H12.5" stroke="#fff" stroke-width="0.9"/><ellipse cx="7.5" cy="14.5" rx="3" ry="6.5" fill="none" stroke="#fff" stroke-width="0.9"/></svg>
<div class="t" style="left:1510px;top:255px;font-size:19px;color:#1E1E1E;font-weight:bold;">Zhaoxi.AspNetCore31.Demo</div>
<svg class="s" style="left:1506px;top:282px;" width="24" height="22" viewBox="0 0 24 22"><path d="M6 15C2 15 1 12 1 10C1 7 3 5 6 5C7 2 10 1 12 1C16 1 18 4 18 6C21 6 23 8 23 11C23 13 21 15 18 15" fill="none" stroke="#424242" stroke-width="1.7"/><path d="M9 8V11M15 8V11M8 11H16V14C16 16 14 17 12 17C10 17 8 16 8 14ZM12 17V21" fill="none" stroke="#388A34" stroke-width="1.8"/></svg>
<div class="t" style="left:1536px;top:281px;font-size:18.6px;color:#1E1E1E;font-weight:normal;">Connected Services</div>
<svg class="s" style="left:1474px;top:314px;" width="10" height="10" viewBox="0 0 10 10"><path d="M9 0V9H0Z" fill="#1E1E1E"/></svg>
<svg class="s" style="left:1506px;top:308px;" width="23" height="23" viewBox="0 0 23 23"><path d="M1.5 2H8.5L10.5 4H19.5V8H7L4.5 11H1.5Z" fill="#EDEDED" stroke="#DCB67A" stroke-width="1.3"/><path d="M6 16L9 8H22.5L19.5 16Z" fill="#DCB67A"/><rect x="6" y="12" width="3" height="4" fill="#DCB67A"/><circle cx="5" cy="12.8" r="3.9" fill="#3C3C3C"/><rect x="4" y="8" width="2" height="4.2" fill="#F5F5F5"/><rect x="3.8" y="15" width="2.5" height="7" rx="1.2" fill="#3C3C3C"/></svg>
<div class="t" style="left:1536px;top:307px;font-size:19.4px;color:#1E1E1E;font-weight:normal;">Properties</div>
<svg class="s" style="left:1501px;top:340px;" width="10" height="10" viewBox="0 0 10 10"><path d="M9 0V9H0Z" fill="#1E1E1E"/></svg>
<svg class="s" style="left:1533px;top:335px;" width="22" height="18" viewBox="0 0 22 18"><path d="M1 2H8L10 4H18V8H5L1 16Z" fill="none" stroke="#DCB67A" stroke-width="1.6"/><path d="M1 16L5 8H21L17 16Z" fill="#DCB67A"/></svg>
<div class="t" style="left:1564px;top:333px;font-size:19.4px;color:#1E1E1E;font-weight:normal;">PublishProfiles</div>
<svg class="s" style="left:1560px;top:360px;" width="22" height="22" viewBox="0 0 22 22"><path d="M5 14V1H13L18 6V21H15" fill="none" stroke="#424242" stroke-width="1.6"/><path d="M13 1V6H18" fill="none" stroke="#424242" stroke-width="1.4"/><path d="M3 16L1 18L3 20M13 16L15 18L13 20" fill="none" stroke="#424242" stroke-width="1.2"/><rect x="5" y="15" width="6" height="6" rx="1.5" fill="#424242"/></svg>
<div class="t" style="left:1590px;top:359px;font-size:19.4px;color:#1E1E1E;font-weight:normal;">FolderProfile.pubxml</div>
<svg class="s" style="left:1532px;top:385px;" width="24" height="23" viewBox="0 0 24 23"><path d="M6.5 4H17V17.5C17 19 16 19.5 15 19.5H10L8.5 14.5H6.5Z" fill="#EDEDED"/><path d="M5.7 10.8V6.2C5.7 4 7 2.8 9 2.8H20.2C21.6 2.8 22.6 3.6 22.6 5.2" fill="none" stroke="#3C3C3C" stroke-width="2.5"/><path d="M17.3 4V16.8C17.3 18.8 16 19.8 14.6 19.8C13.4 19.8 12.3 19.2 11.8 18.4" fill="none" stroke="#3C3C3C" stroke-width="2"/><circle cx="6.2" cy="16.8" r="3.3" fill="#F5F5F5" stroke="#3C3C3C" stroke-width="2.4"/></svg>
<div class="t" style="left:1564px;top:385px;font-size:19.4px;color:#1E1E1E;font-weight:normal;">launchSettings.json</div>
<svg class="s" style="left:1473px;top:414.5px;" width="10" height="15" viewBox="0 0 10 15"><path d="M1.2 1.2L8 7.5L1.2 13.8Z" fill="none" stroke="#1E1E1E" stroke-width="1.6"/></svg>
<svg class="s" style="left:1506px;top:412px;" width="23" height="23" viewBox="0 0 23 23"><circle cx="11" cy="10.6" r="9.6" fill="none" stroke="#424242" stroke-width="1.8"/><ellipse cx="11" cy="10.6" rx="3.6" ry="9.6" fill="none" stroke="#424242" stroke-width="1.6"/><path d="M2 7H20M2 12.5H20" stroke="#424242" stroke-width="1.6"/></svg>
<div class="t" style="left:1536px;top:411px;font-size:19.4px;color:#1E1E1E;font-weight:normal;">wwwroot</div>
<svg class="s" style="left:1473px;top:440.5px;" width="10" height="15" viewBox="0 0 10 15"><path d="M1.2 1.2L8 7.5L1.2 13.8Z" fill="none" stroke="#1E1E1E" stroke-width="1.6"/></svg>
<svg class="s" style="left:1506px;top:439px;" width="24" height="18" viewBox="0 0 24 18"><rect x="5" y="3" width="4" height="4" fill="#424242"/><rect x="10.5" y="4.5" width="2" height="1.2" fill="#424242"/><rect x="16" y="1" width="6" height="7" fill="#424242"/><rect x="0.5" y="10.5" width="4.5" height="4.5" fill="#424242"/><rect x="6.5" y="12" width="2" height="1.2" fill="#424242"/><rect x="11.5" y="9.5" width="6" height="7" fill="#424242"/></svg>
<div class="t" style="left:1536px;top:437px;font-size:19.4px;color:#1E1E1E;font-weight:normal;">依赖项</div>
<svg class="s" style="left:1474px;top:470px;" width="10" height="10" viewBox="0 0 10 10"><path d="M9 0V9H0Z" fill="#1E1E1E"/></svg>
<svg class="s" style="left:1506px;top:465px;" width="22" height="18" viewBox="0 0 22 18"><path d="M1 2H8L10 4H18V8H5L1 16Z" fill="none" stroke="#DCB67A" stroke-width="1.6"/><path d="M1 16L5 8H21L17 16Z" fill="#DCB67A"/></svg>
<div class="t" style="left:1536px;top:463px;font-size:19.4px;color:#1E1E1E;font-weight:normal;">Controllers</div>
<svg class="s" style="left:1500px;top:492.5px;" width="10" height="15" viewBox="0 0 10 15"><path d="M1.2 1.2L8 7.5L1.2 13.8Z" fill="none" stroke="#1E1E1E" stroke-width="1.6"/></svg>
<svg class="s" style="left:1535px;top:491px;" width="20" height="17" viewBox="0 0 20 17"><path d="M9.2 5.2C8.4 4 7.4 3.6 6.3 3.6C3.8 3.6 2.3 5.8 2.3 8.7C2.3 11.7 3.8 13.8 6.3 13.8C7.4 13.8 8.4 13.4 9.2 12.4" fill="none" stroke="#388A34" stroke-width="2.5"/><path d="M12.6 3.3V10.6M15.6 3.3V10.6M10.4 5.6H18.2M10.4 8.4H18.2" stroke="#388A34" stroke-width="1.5"/></svg>
<div class="t" style="left:1564px;top:489px;font-size:19.4px;color:#1E1E1E;font-weight:normal;">FirstController.cs</div>
<svg class="s" style="left:1500px;top:518.5px;" width="10" height="15" viewBox="0 0 10 15"><path d="M1.2 1.2L8 7.5L1.2 13.8Z" fill="none" stroke="#1E1E1E" stroke-width="1.6"/></svg>
<svg class="s" style="left:1535px;top:517px;" width="20" height="17" viewBox="0 0 20 17"><path d="M9.2 5.2C8.4 4 7.4 3.6 6.3 3.6C3.8 3.6 2.3 5.8 2.3 8.7C2.3 11.7 3.8 13.8 6.3 13.8C7.4 13.8 8.4 13.4 9.2 12.4" fill="none" stroke="#388A34" stroke-width="2.5"/><path d="M12.6 3.3V10.6M15.6 3.3V10.6M10.4 5.6H18.2M10.4 8.4H18.2" stroke="#388A34" stroke-width="1.5"/></svg>
<div class="t" style="left:1564px;top:515px;font-size:19.4px;color:#1E1E1E;font-weight:normal;">HomeController.cs</div>
<svg class="s" style="left:1473px;top:544.5px;" width="10" height="15" viewBox="0 0 10 15"><path d="M1.2 1.2L8 7.5L1.2 13.8Z" fill="none" stroke="#1E1E1E" stroke-width="1.6"/></svg>
<svg class="s" style="left:1506px;top:544px;" width="20" height="16" viewBox="0 0 20 16"><path d="M0 1H7L9 3H19V16H0Z" fill="#DCB67A"/><rect x="1" y="4" width="7" height="1.2" fill="#F5F5F5"/></svg>
<div class="t" style="left:1536px;top:541px;font-size:19.4px;color:#1E1E1E;font-weight:normal;">log</div>
<svg class="s" style="left:1473px;top:570.5px;" width="10" height="15" viewBox="0 0 10 15"><path d="M1.2 1.2L8 7.5L1.2 13.8Z" fill="none" stroke="#1E1E1E" stroke-width="1.6"/></svg>
<svg class="s" style="left:1506px;top:570px;" width="20" height="16" viewBox="0 0 20 16"><path d="M0 1H7L9 3H19V16H0Z" fill="#DCB67A"/><rect x="1" y="4" width="7" height="1.2" fill="#F5F5F5"/></svg>
<div class="t" style="left:1536px;top:567px;font-size:19.4px;color:#1E1E1E;font-weight:normal;">Models</div>
<svg class="s" style="left:1473px;top:596.5px;" width="10" height="15" viewBox="0 0 10 15"><path d="M1.2 1.2L8 7.5L1.2 13.8Z" fill="none" stroke="#1E1E1E" stroke-width="1.6"/></svg>
<svg class="s" style="left:1506px;top:596px;" width="20" height="16" viewBox="0 0 20 16"><path d="M0 1H7L9 3H19V16H0Z" fill="#DCB67A"/><rect x="1" y="4" width="7" height="1.2" fill="#F5F5F5"/></svg>
<div class="t" style="left:1536px;top:593px;font-size:19.4px;color:#1E1E1E;font-weight:normal;">Views</div>
<svg class="s" style="left:1473px;top:622.5px;" width="10" height="15" viewBox="0 0 10 15"><path d="M1.2 1.2L8 7.5L1.2 13.8Z" fill="none" stroke="#1E1E1E" stroke-width="1.6"/></svg>
<svg class="s" style="left:1505px;top:619px;" width="24" height="23" viewBox="0 0 24 23"><path d="M6.5 4H17V17.5C17 19 16 19.5 15 19.5H10L8.5 14.5H6.5Z" fill="#EDEDED"/><path d="M5.7 10.8V6.2C5.7 4 7 2.8 9 2.8H20.2C21.6 2.8 22.6 3.6 22.6 5.2" fill="none" stroke="#3C3C3C" stroke-width="2.5"/><path d="M17.3 4V16.8C17.3 18.8 16 19.8 14.6 19.8C13.4 19.8 12.3 19.2 11.8 18.4" fill="none" stroke="#3C3C3C" stroke-width="2"/><circle cx="6.2" cy="16.8" r="3.3" fill="#F5F5F5" stroke="#3C3C3C" stroke-width="2.4"/></svg>
<div class="t" style="left:1536px;top:619px;font-size:19.4px;color:#1E1E1E;font-weight:normal;">appsettings.json</div>
<svg class="s" style="left:1506px;top:646px;" width="22" height="23" viewBox="0 0 22 23"><path d="M4.5 1H10.5L16 6.5V20H8V15H4.5Z" fill="#EDEDED"/><path d="M4.3 4.5V1H10.5L16 6.5V20.2H8" fill="none" stroke="#3C3C3C" stroke-width="1.6"/><path d="M10.5 1V6.5H16" fill="none" stroke="#3C3C3C" stroke-width="1.4"/><circle cx="5" cy="10.8" r="4" fill="#3C3C3C"/><rect x="4" y="6" width="2" height="4.2" fill="#F5F5F5"/><rect x="3.8" y="13" width="2.5" height="7.5" rx="1.2" fill="#3C3C3C"/></svg>
<div class="t" style="left:1536px;top:645px;font-size:19.4px;color:#1E1E1E;font-weight:normal;">log4net.Config</div>
<svg class="s" style="left:1473px;top:674.5px;" width="10" height="15" viewBox="0 0 10 15"><path d="M1.2 1.2L8 7.5L1.2 13.8Z" fill="none" stroke="#1E1E1E" stroke-width="1.6"/></svg>
<svg class="s" style="left:1507px;top:673px;" width="20" height="17" viewBox="0 0 20 17"><path d="M9.2 5.2C8.4 4 7.4 3.6 6.3 3.6C3.8 3.6 2.3 5.8 2.3 8.7C2.3 11.7 3.8 13.8 6.3 13.8C7.4 13.8 8.4 13.4 9.2 12.4" fill="none" stroke="#388A34" stroke-width="2.5"/><path d="M12.6 3.3V10.6M15.6 3.3V10.6M10.4 5.6H18.2M10.4 8.4H18.2" stroke="#388A34" stroke-width="1.5"/></svg>
<div class="t" style="left:1536px;top:671px;font-size:19.4px;color:#1E1E1E;font-weight:normal;">Program.cs</div>
<svg class="s" style="left:1473px;top:700.5px;" width="10" height="15" viewBox="0 0 10 15"><path d="M1.2 1.2L8 7.5L1.2 13.8Z" fill="none" stroke="#1E1E1E" stroke-width="1.6"/></svg>
<svg class="s" style="left:1507px;top:699px;" width="20" height="17" viewBox="0 0 20 17"><path d="M9.2 5.2C8.4 4 7.4 3.6 6.3 3.6C3.8 3.6 2.3 5.8 2.3 8.7C2.3 11.7 3.8 13.8 6.3 13.8C7.4 13.8 8.4 13.4 9.2 12.4" fill="none" stroke="#388A34" stroke-width="2.5"/><path d="M12.6 3.3V10.6M15.6 3.3V10.6M10.4 5.6H18.2M10.4 8.4H18.2" stroke="#388A34" stroke-width="1.5"/></svg>
<div class="t" style="left:1536px;top:697px;font-size:19.4px;color:#1E1E1E;font-weight:normal;">Startup.cs</div>
<svg class="s" style="left:1438px;top:923px;" width="8" height="13" viewBox="0 0 8 13"><path d="M7 0V13L0 6.5Z" fill="#868999"/></svg>
<div class="b" style="left:1456px;top:923px;width:323px;height:14px;background:#C2C3C9"></div>
<svg class="s" style="left:1855px;top:923px;" width="8" height="13" viewBox="0 0 8 13"><path d="M0 0V13L7 6.5Z" fill="#868999"/></svg>
<div class="b" style="left:1428px;top:943px;width:181px;height:32px;background:#F5F5F5;border:2px solid #CCCEDB;border-top:none;box-sizing:border-box"></div>
<div class="t" style="left:1438px;top:948px;font-size:18px;color:#0E70C0;font-weight:normal;">解决方案资源管理器</div>
<div class="t" style="left:1619px;top:948px;font-size:18px;color:#444;font-weight:normal;">属性</div>
<div class="t" style="left:1674px;top:948px;font-size:18px;color:#444;font-weight:normal;">Git 更改</div>
<div class="t" style="left:1907px;top:108px;font-size:18.5px;color:#444;transform-origin:0 0;transform:rotate(90deg);line-height:22px">诊断工具</div>
<div class="b" style="left:1911px;top:110px;width:9px;height:72px;background:#CCCEDB"></div>
<div class="b" style="left:1691px;top:981px;width:229px;height:38px;background:#fff;border:1px solid #C9D9EA;box-sizing:border-box"></div>
<svg class="s" style="left:1637px;top:993px;" width="14" height="20" viewBox="0 0 14 20"><path d="M7 19V4M1.5 9L7 3L12.5 9" fill="none" stroke="#D0D0D0" stroke-width="3.2"/></svg>
<svg class="s" style="left:1651px;top:974px;" width="50" height="48" viewBox="0 0 50 48"><path d="M6 8L40 1C44 0 46 2 47 6L49 38C49 42 47 44 43 45L12 47C8 47 6 45 5 41L1 14C0 10 2 9 6 8Z" fill="#F05A22"/><path d="M36 13C32 9 20 9 15 14C11 18 15 23 22 24C29 25 33 27 30 32C27 36 17 36 12 32" fill="none" stroke="#fff" stroke-width="6" stroke-linecap="round"/></svg>
<svg class="s" style="left:1709px;top:989px;" width="24" height="24" viewBox="0 0 24 24"><rect x="2" y="6" width="19" height="10" fill="none" stroke="#0E6FD4" stroke-width="3"/><path d="M11.5 1V23" stroke="#0E6FD4" stroke-width="3"/></svg>
<svg class="s" style="left:1745px;top:990px;" width="24" height="22" viewBox="0 0 24 22"><circle cx="5" cy="6" r="3" fill="none" stroke="#0E6FD4" stroke-width="2.2"/><path d="M16 12C18 12 18 15 15 19" fill="none" stroke="#0E6FD4" stroke-width="3" stroke-linecap="round"/><circle cx="16" cy="13" r="2.5" fill="#0E6FD4"/></svg>
<svg class="s" style="left:1782px;top:987px;" width="20" height="28" viewBox="0 0 20 28"><rect x="6" y="1" width="8" height="15" rx="4" fill="#0E6FD4"/><path d="M2.5 11C2.5 16 6 19 10 19C14 19 17.5 16 17.5 11M10 19V24M6 25H14" fill="none" stroke="#0E6FD4" stroke-width="2.2"/></svg>
<svg class="s" style="left:1817px;top:991px;" width="24" height="20" viewBox="0 0 24 20"><rect x="1.5" y="2.5" width="21" height="15" rx="1.5" fill="none" stroke="#0E6FD4" stroke-width="2.4"/><path d="M5 7H19M5 10.5H19M5 14H19" stroke="#0E6FD4" stroke-width="1.6" stroke-dasharray="2 1.5"/></svg>
<svg class="s" style="left:1852px;top:990px;" width="24" height="22" viewBox="0 0 24 22"><path d="M8 1C9 3 15 3 16 1L23 4L21 10L18 9V21H6V9L3 10L1 4Z" fill="#0E6FD4"/></svg>
<svg class="s" style="left:1890px;top:990px;" width="24" height="22" viewBox="0 0 24 22"><rect x="2" y="2" width="8" height="8" rx="2" fill="#0E6FD4"/><rect x="13" y="1" width="9" height="9" rx="3" fill="#0E6FD4"/><rect x="2" y="12" width="8" height="8" rx="2" fill="#0E6FD4"/><rect x="13" y="12" width="8" height="8" rx="2" fill="#0E6FD4"/></svg>
<div class="t" style="left:1759px;top:1026px;font-size:16px;color:#1E1E1E;font-weight:normal;">22:06</div>
<div class="b" style="left:1912px;top:1019px;width:2px;height:12px;background:#7A8A95"></div>
<svg class="s" style="left:0;top:0" width="1920" height="1031" viewBox="0 0 1920 1031"><path d="M778.4 84.3L785.9 87.5L714 274L692 274Z" fill="#F24A48"/><path d="M684.7 257.6L723.2 272.8L688.2 302.6Z" fill="#F24A48" stroke="#F24A48" stroke-width="4" stroke-linejoin="round"/><path d="M823.4 105.1L1474 366.2L1463 387.2L820.8 110.8Z" fill="#F24A48"/><path d="M1478 356.9L1461.2 396.1L1507.3 390.9Z" fill="#F24A48" stroke="#F24A48" stroke-width="4" stroke-linejoin="round"/><path d="M1503 389L1517 403" stroke="#F24A48" stroke-width="1.6"/></svg></body></html>
